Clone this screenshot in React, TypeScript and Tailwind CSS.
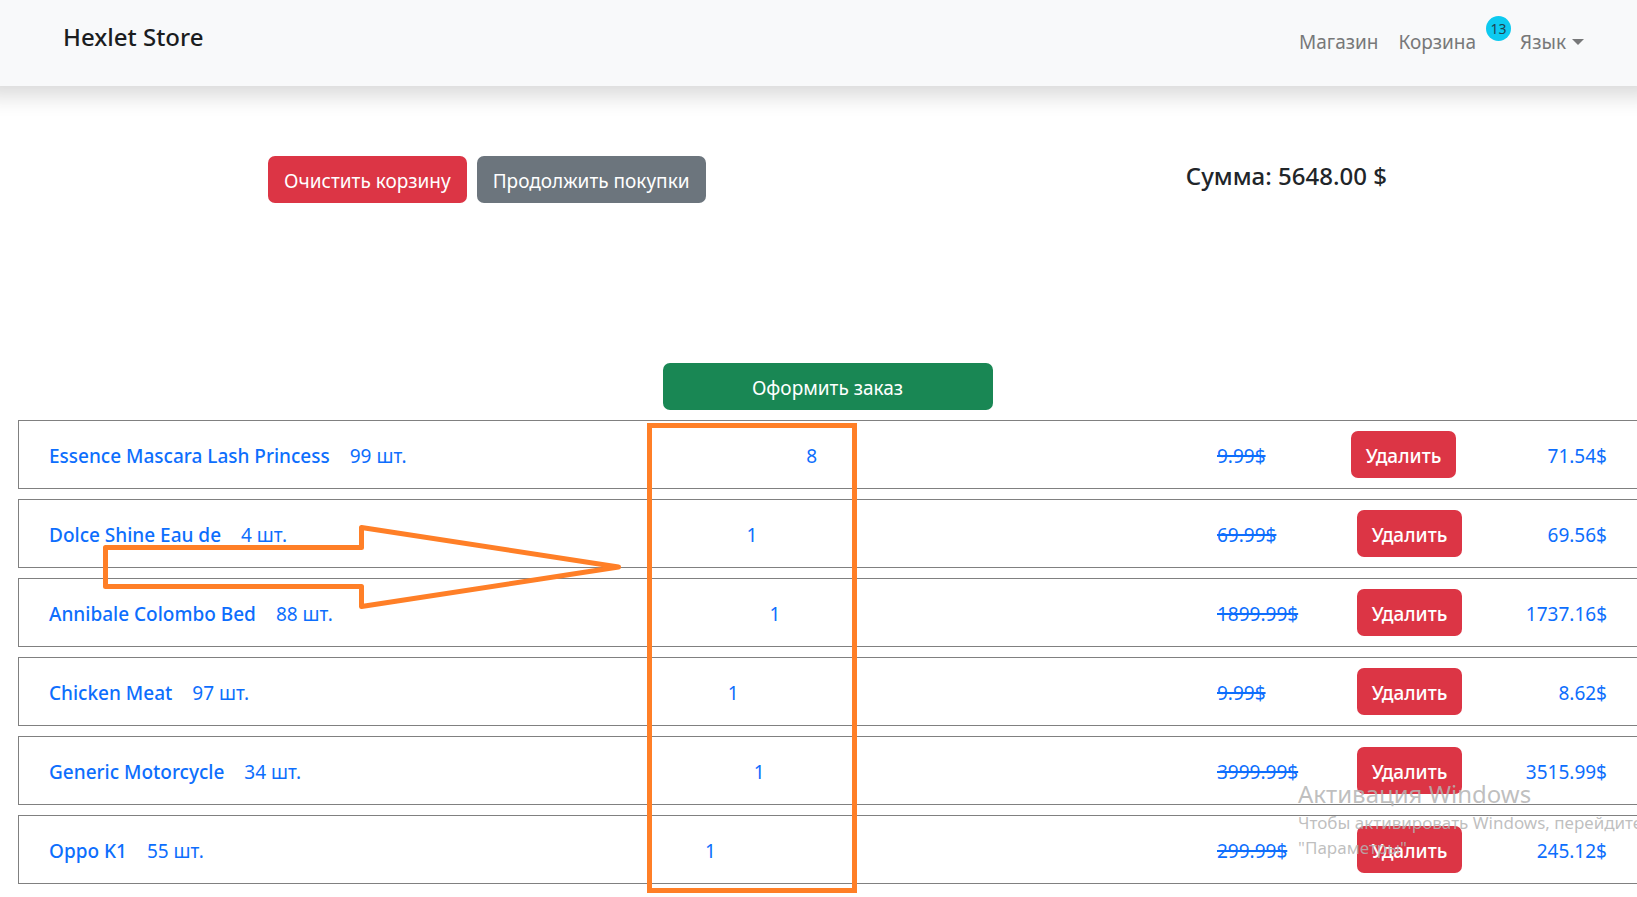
type Item = {
  name: string;
  stock: number;
  count: number;
  price: string;
  total: string;
};

const items: Item[] = [
  { name: 'Essence Mascara Lash Princess', stock: 99, count: 8, price: '9.99$', total: '71.54$' },
  { name: 'Dolce Shine Eau de', stock: 4, count: 1, price: '69.99$', total: '69.56$' },
  { name: 'Annibale Colombo Bed', stock: 88, count: 1, price: '1899.99$', total: '1737.16$' },
  { name: 'Chicken Meat', stock: 97, count: 1, price: '9.99$', total: '8.62$' },
  { name: 'Generic Motorcycle', stock: 34, count: 1, price: '3999.99$', total: '3515.99$' },
  { name: 'Oppo K1', stock: 55, count: 1, price: '299.99$', total: '245.12$' },
];

function Header() {
  return (
    <header className="flex h-[86px] items-start justify-between bg-[#f8f9fa] pr-[53px] pl-[63px] shadow-[0_-10px_20px_20px_rgba(0,0,0,0.15)]">
      <a href="#" className="mt-[19px] text-[24px] leading-9 font-medium text-[#1b1d1f]">
        Hexlet Store
      </a>
      <nav className="mt-7 flex items-start text-[19px] leading-7 text-[#777879]">
        <a href="#shop">Магазин</a>
        <a href="#cart" className="ml-5">
          Корзина
        </a>
        <span className="-mt-3 ml-[10px] flex size-[25px] items-center justify-center rounded-full bg-[#0dcaf0] text-[14px] leading-5 text-[#1f4450]">
          13
        </span>
        <button type="button" className="ml-[9px] flex items-center gap-[6px]">
          Язык
          <svg className="h-[6px] w-3" viewBox="0 0 12 6" fill="currentColor" aria-hidden="true">
            <path d="M0 0H12L6 6Z" />
          </svg>
        </button>
      </nav>
    </header>
  );
}

function CartRow({ item }: { item: Item }) {
  return (
    <li className="flex h-[69px] items-center justify-between border border-r-0 border-[#808080] pr-[30px] pl-[30px] text-[19px] leading-7 text-[#0d6efd]">
      <div className="flex gap-5 pt-0.5">
        <a href="#product" className="font-medium">
          {item.name}
        </a>
        <span>{item.stock} шт.</span>
      </div>
      <span className="pt-0.5">{item.count}</span>
      <div className="flex w-[390px] items-center">
        <s className={item.count > 1 ? 'w-[134px] pt-0.5 decoration-2' : 'w-[140px] pt-0.5 decoration-2'}>
          {item.price}
        </s>
        <button type="button" className="h-[47px] w-[105px] rounded-[7px] bg-[#dc3545] pt-0.5 font-medium text-white">
          Удалить
        </button>
        <span className="ml-auto pt-0.5">{item.total}</span>
      </div>
    </li>
  );
}

function Annotation() {
  return (
    <>
      <div className="pointer-events-none absolute top-[423px] left-[647px] h-[470px] w-[210px] border-5 border-[#ff7f27]" />
      <svg
        className="pointer-events-none absolute top-[520px] left-[100px] h-[94px] w-[524px]"
        viewBox="100 520 524 94"
        fill="none"
        stroke="#ff7f27"
        strokeWidth="5"
        strokeLinejoin="round"
        aria-hidden="true"
      >
        <path d="M105.5 547.5H361.5V527.5L618.5 567L361.5 606.5V586.5H105.5Z" />
      </svg>
    </>
  );
}

function ActivationNotice() {
  return (
    <div className="pointer-events-none absolute top-[778px] left-[1298px] text-[#b4b4b4]/85">
      <p className="text-[24px] leading-8">Активация Windows</p>
      <p className="text-[17px] leading-[25px] whitespace-nowrap">
        Чтобы активировать Windows, перейдите
        <br />
        "Параметры"
      </p>
    </div>
  );
}

export default function App() {
  return (
    <div className="relative min-h-screen overflow-hidden bg-white pb-3 font-['Noto_Sans',sans-serif] text-[#212529]">
      <Header />
      <main className="pl-[18px]">
        <section className="flex items-start justify-around px-[10px] pt-[70px]">
          <div className="flex gap-[10px] text-[19px] leading-7 text-white">
            <button type="button" className="h-[47px] rounded-[7px] bg-[#dc3545] px-4 pt-0.5">
              Очистить корзину
            </button>
            <button type="button" className="h-[47px] rounded-[7px] bg-[#6c757d] px-4 pt-0.5">
              Продолжить покупки
            </button>
          </div>
          <h2 className="pt-1 text-[24px] leading-8 font-medium">Сумма: 5648.00 $</h2>
        </section>
        <button
          type="button"
          className="mx-auto mt-40 block h-[47px] w-[330px] rounded-[7px] bg-[#198754] pt-0.5 text-[19px] leading-7 text-white"
        >
          Оформить заказ
        </button>
        <ul className="mt-[10px] flex flex-col gap-[10px]">
          {items.map((item) => (
            <CartRow key={item.name} item={item} />
          ))}
        </ul>
      </main>
      <Annotation />
      <ActivationNotice />
    </div>
  );
}
